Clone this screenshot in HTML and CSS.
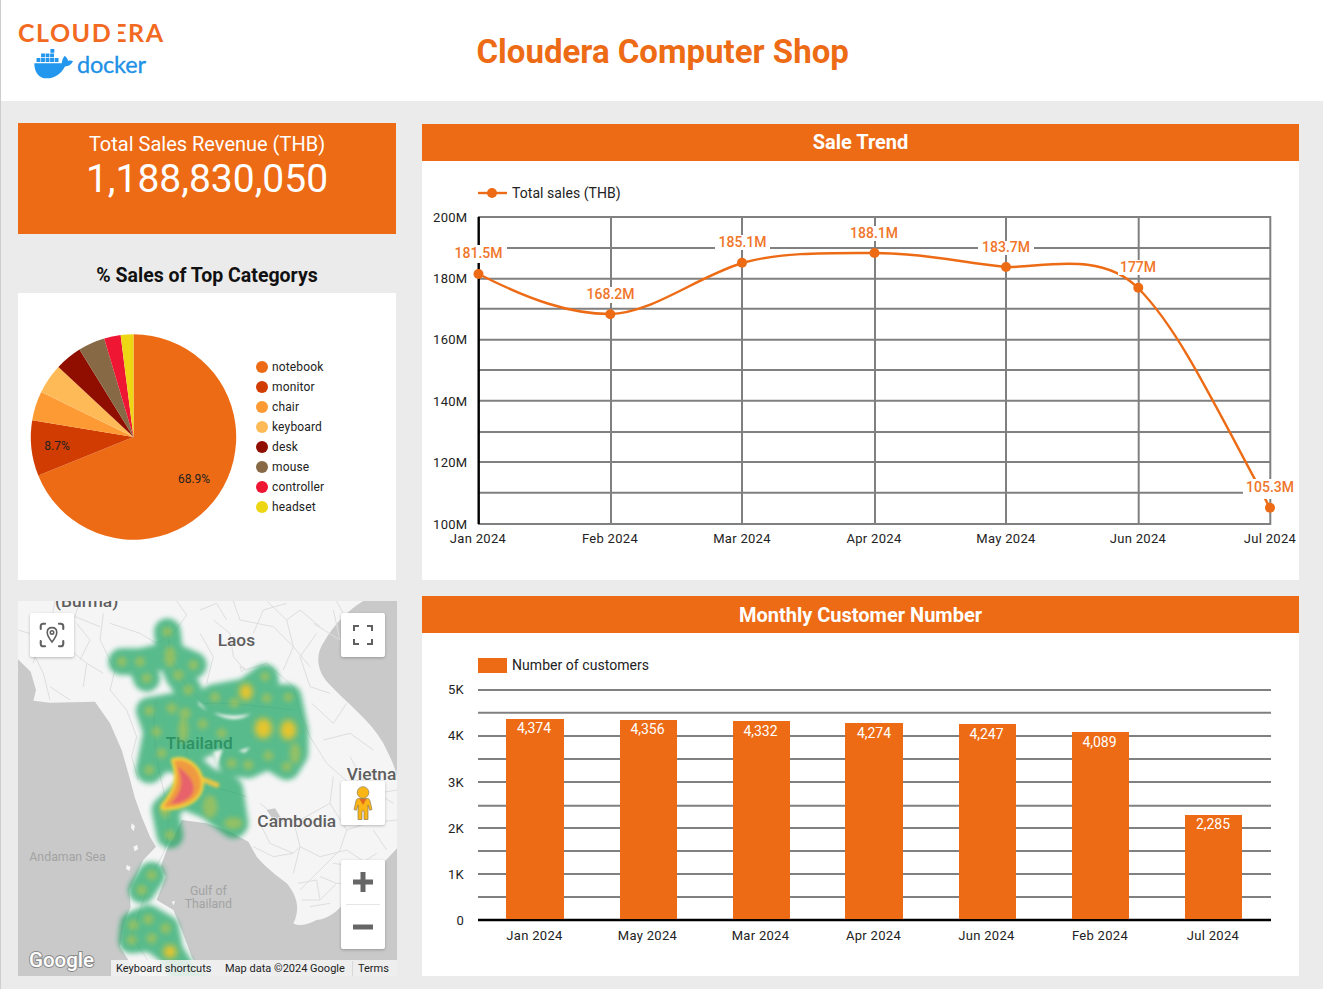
FILE: index.html
```html
<!DOCTYPE html>
<html lang="en">
<head>
<meta charset="utf-8">
<title>Cloudera Computer Shop</title>
<link rel="stylesheet" href="styles.css">
</head>
<body>
<div class="page">
  <header class="top">
    <div class="brand">
      <div class="cloudera">CLOUD<span class="logo-e">E</span>RA</div>
      <div class="docker">
        <svg class="whale" viewBox="100 140 125 96">
          <path class="whale-body" d="M103 187H188C189 177 193 169 197 164C203 169 207 175 208 180C213 178 218 178 223 181C218 192 208 197 198 197C188 216 170 234 140 234C118 234 103 215 103 187Z"/>
          <path class="whale-body" d="M110 171h12v12h-12zM124 171h12v12h-12zM138 171h12v12h-12zM152 171h12v12h-12zM166 171h12v12h-12zM124 157h12v12h-12zM138 157h12v12h-12zM152 157h12v12h-12zM153 143h12v12h-12z"/>
        </svg>
        <span class="docker-word">docker</span>
      </div>
    </div>
    <h1 class="title">Cloudera Computer Shop</h1>
  </header>

  <main class="board">
    <section class="left">
      <div class="kpi">
        <div class="kpi-label">Total Sales Revenue (THB)</div>
        <div class="kpi-value">1,188,830,050</div>
      </div>
      <h2 class="pie-title">% Sales of Top Categorys</h2>
      <div class="pie-card">
        <svg class="pie" viewBox="18 293 238 287">
          <path class="s1" d="M133.5 437V334.3A102.7 102.7 0 1 1 38.3 475.5Z"/>
          <path class="s2" d="M133.5 437L38.3 475.5A102.7 102.7 0 0 1 32.2 420.2Z"/>
          <path class="s3" d="M133.5 437L32.2 420.2A102.7 102.7 0 0 1 41.2 392Z"/>
          <path class="s4" d="M133.5 437L41.2 392A102.7 102.7 0 0 1 58.4 367Z"/>
          <path class="s5" d="M133.5 437L58.4 367A102.7 102.7 0 0 1 79.5 349.6Z"/>
          <path class="s6" d="M133.5 437L79.5 349.6A102.7 102.7 0 0 1 104.2 338.6Z"/>
          <path class="s7" d="M133.5 437L104.2 338.6A102.7 102.7 0 0 1 120.6 335.1Z"/>
          <path class="s8" d="M133.5 437L120.6 335.1A102.7 102.7 0 0 1 133.5 334.3Z"/>
          <text class="pie-pct" x="57" y="450" text-anchor="middle">8.7%</text>
          <text class="pie-pct" x="194" y="483" text-anchor="middle">68.9%</text>
        </svg>
        <ul class="legend">
          <li class="legend-item"><i class="dot s1"></i>notebook</li>
          <li class="legend-item"><i class="dot s2"></i>monitor</li>
          <li class="legend-item"><i class="dot s3"></i>chair</li>
          <li class="legend-item"><i class="dot s4"></i>keyboard</li>
          <li class="legend-item"><i class="dot s5"></i>desk</li>
          <li class="legend-item"><i class="dot s6"></i>mouse</li>
          <li class="legend-item"><i class="dot s7"></i>controller</li>
          <li class="legend-item"><i class="dot s8"></i>headset</li>
        </ul>
      </div>

      <div class="map">
        <svg class="map-art" viewBox="54 33 1137 1125">
          <defs>
            <filter id="b8" filterUnits="userSpaceOnUse" x="0" y="0" width="1300" height="1300"><feGaussianBlur stdDeviation="8"/></filter>
            <filter id="b5" filterUnits="userSpaceOnUse" x="0" y="0" width="1300" height="1300"><feGaussianBlur stdDeviation="5"/></filter>
            <filter id="b9" filterUnits="userSpaceOnUse" x="0" y="0" width="1300" height="1300"><feGaussianBlur stdDeviation="9"/></filter>
          </defs>
          <rect class="water" x="54" y="33" width="1137" height="1125"/>
          <path class="land" d="M54 33H1090C1045 60 1005 100 972 155C945 195 950 240 985 280C1040 340 1110 390 1150 460C1170 500 1185 530 1191 560V775C1150 820 1100 870 1060 905C1020 960 990 985 950 990C920 1005 895 1010 880 1000C905 950 885 910 860 880C835 860 800 835 770 800L745 755L690 725L620 700L545 690L520 745L500 780L482 830L497 860L470 930L520 960L545 1020L575 1100L605 1158H420L385 1110L360 1070L372 1000L392 950L388 900L405 865L430 810L468 770L450 740L425 680L405 625L388 560L365 480L330 400L285 335L150 338L100 332L108 300L92 245L54 208Z"/>
          <path class="land" d="M380 825l12 6-4 12-10-6zM400 770l12-6 2 14-10 6zM395 700l10 8-4 16-8-10zM515 935l10-3-4 14z"/>
          <g class="roads">
            <path d="M165 33L150 110L90 170L130 250L150 330"/>
            <path d="M310 70L300 150L345 240L330 300L380 360L410 440L395 500L415 570"/>
            <path d="M530 33L560 75L520 130L470 160L420 130L330 100"/>
            <path d="M640 90L690 130L700 200L735 240L800 220L880 290L900 370L930 440"/>
            <path d="M700 33L720 90L820 110L880 170L930 230"/>
            <path d="M800 33L860 90L900 60L960 110"/>
            <path d="M930 440L980 520L1060 590L1130 610L1191 600"/>
            <path d="M1000 560L990 640L1040 720L1020 780L960 840L900 900"/>
            <path d="M780 640L830 680L900 690L990 640"/>
            <path d="M880 690L900 770L960 800L1040 780L1100 820"/>
            <path d="M820 800L880 790L900 770"/>
            <path d="M1040 720L1100 700L1191 690"/>
            <path d="M1050 500L1100 590L1180 640"/>
            <path d="M960 860L1010 880L1060 880M905 930L960 930L1010 880"/>
            <path d="M150 200L210 180L260 220L250 290"/>
            <path d="M230 100L270 150L240 210"/>
            <path d="M470 330C450 420 470 520 500 640C505 700 510 740 490 790L450 860"/>
            <path d="M500 100L510 200L560 290L610 340L700 340L880 360"/>
            <path d="M555 370L560 500L640 590L740 620"/>
            <path d="M940 100L1020 150L1000 60M1040 90L1010 33"/>
            <path d="M600 60L650 40L680 90"/>
            <path d="M720 230L735 235L725 245Z"/>
            <path d="M470 1158L430 1090L395 1040L440 900"/>
            <path d="M55 120L120 140L165 110M120 140L100 220"/>
            <path d="M240 33L225 80L300 110M260 220L310 250M150 290L210 330"/>
            <path d="M860 90L880 170L850 240M950 130L900 200L930 290L990 310"/>
            <path d="M760 130L790 60L860 40M600 130L640 200L620 280"/>
            <path d="M935 340L1000 400L1040 340M970 450L1050 430L1120 480"/>
            <path d="M1080 560L1040 620L1090 670L1150 660M1120 720L1160 780"/>
            <path d="M780 700L810 760L880 790M760 770L820 800"/>
            <path d="M900 770L880 850M1000 820L1070 830L1130 790"/>
            <path d="M930 950L990 940M895 880L950 870L960 930"/>
          </g>
          <path class="tonle" d="M800 660L825 655L850 695L820 690Z"/>
          <text class="m-big" x="260" y="50" text-anchor="middle">(Burma)</text>
          <text class="m-big" x="653" y="168">Laos</text>
          <text class="m-big" x="497" y="477">Thailand</text>
          <text class="m-big" x="1040" y="570">Vietnam</text>
          <text class="m-big" x="772" y="710">Cambodia</text>
          <text class="m-sea" x="88" y="812">Andaman Sea</text>
          <text class="m-sea" x="625" y="915" text-anchor="middle">Gulf of</text>
          <text class="m-sea" x="625" y="955" text-anchor="middle">Thailand</text>
          <g class="heat-green" filter="url(#b8)">
            <path d="M365 215L420 215L440 265M420 215L510 195L502 125M510 195L580 225M510 195L535 255L565 300"/>
            <path d="M448 362L515 350L555 370L645 322L738 305L795 262L800 325L865 322L885 420L885 490L860 530L805 497L745 525L695 520M448 362L470 425L448 540M470 425L608 402L665 430L790 415L885 420M555 370L550 480M645 322L608 402M738 305L790 415L805 497M665 430L695 520"/>
            <path class="heat-fill" d="M470 400L600 350L780 350L860 400L860 490L720 500L640 470L560 510L470 510Z"/>
            <path d="M448 540L490 500L560 520L620 570L690 600L705 700M690 600L630 650L700 705M560 600L495 660L510 735M630 650L560 620"/>
            <path d="M455 855L425 900"/>
            <path d="M400 1005L445 985L497 1015L510 1085L455 1045L395 1050L400 1005M510 1085L570 1180L620 1200"/>
          </g>
          <g class="heat-holes" filter="url(#b5)">
            <path d="M640 368C680 392 720 395 755 370C735 378 690 380 640 368Z"/>
            <path d="M592 332L612 352L620 362L598 346Z"/>
            <path d="M715 482L750 472L735 488Z"/>
            <path d="M640 485L668 478L650 530Z"/>
          </g>
          <g class="heat-spots" filter="url(#b8)">
            <circle cx="502" cy="125" r="15"/><circle cx="365" cy="215" r="15"/><circle cx="420" cy="215" r="15"/><circle cx="440" cy="265" r="15"/><circle cx="580" cy="225" r="15"/><circle cx="535" cy="255" r="16"/><circle cx="565" cy="300" r="15"/><circle cx="645" cy="322" r="15"/><circle cx="703" cy="338" r="15"/><circle cx="800" cy="325" r="15"/><circle cx="795" cy="260" r="14"/><circle cx="865" cy="322" r="14"/><circle cx="448" cy="362" r="15"/><circle cx="515" cy="355" r="16"/><circle cx="555" cy="370" r="17"/><circle cx="470" cy="425" r="15"/><circle cx="608" cy="402" r="15"/><circle cx="665" cy="430" r="15"/><circle cx="805" cy="497" r="15"/><circle cx="695" cy="520" r="15"/><circle cx="745" cy="525" r="15"/><circle cx="860" cy="530" r="15"/><circle cx="448" cy="540" r="15"/><circle cx="485" cy="490" r="15"/><circle cx="510" cy="735" r="15"/><circle cx="455" cy="855" r="16"/><circle cx="425" cy="900" r="16"/><circle cx="400" cy="1005" r="16"/><circle cx="445" cy="988" r="16"/><circle cx="497" cy="1015" r="16"/><circle cx="395" cy="1050" r="15"/><circle cx="455" cy="1045" r="16"/>
            <ellipse cx="510" cy="200" rx="17" ry="32"/><ellipse cx="550" cy="420" rx="15" ry="36"/><ellipse cx="885" cy="490" rx="16" ry="32"/><ellipse cx="700" cy="700" rx="28" ry="18"/><ellipse cx="630" cy="650" rx="22" ry="34"/><ellipse cx="495" cy="660" rx="15" ry="24"/>
          </g>
          <g class="heat-yellow" filter="url(#b9)">
            <ellipse cx="738" cy="306" rx="20" ry="25"/><ellipse cx="790" cy="415" rx="26" ry="30"/><ellipse cx="865" cy="420" rx="24" ry="30"/><circle cx="510" cy="1085" r="20"/>
          </g>
          <g filter="url(#b5)">
            <path class="arm" d="M600 565L650 585"/>
            <path class="blob-y" d="M522 512C552 505 592 522 602 570C610 622 560 652 490 652C505 622 550 590 522 512Z"/>
            <path class="blob-o" d="M522 512C552 505 592 522 602 570C610 622 560 652 490 652C505 622 550 590 522 512Z"/>
            <path class="blob-r" d="M532 530C558 545 586 572 580 604C572 630 540 642 510 642C530 622 560 590 532 530Z"/>
          </g>
        </svg>

        <button class="ctl ctl-geo" type="button" aria-label="Location">
          <svg class="ctl-icon" viewBox="0 0 30 30">
            <path class="stroke-dark" d="M2 8V5Q2 2 5 2H7M23 2H25Q28 2 28 5V8M28 22V25Q28 28 25 28H23M7 28H5Q2 28 2 25V22"/>
            <path class="stroke-dark thin" d="M15 6.500C11.500 6.500 9.500 9 9.500 12C9.500 16 15 23 15 23C15 23 20.500 16 20.500 12C20.500 9 18.500 6.500 15 6.500Z"/>
            <circle class="stroke-dark thin" cx="15" cy="12" r="2"/>
          </svg>
        </button>
        <button class="ctl ctl-full" type="button" aria-label="Fullscreen">
          <svg class="ctl-icon" viewBox="0 0 20 20">
            <path class="stroke-dark sq" d="M1 6V1H6M14 1H19V6M19 14V19H14M6 19H1V14"/>
          </svg>
        </button>
        <button class="ctl ctl-peg" type="button" aria-label="Street View">
          <svg class="peg-icon" viewBox="0 0 20 34">
            <circle class="peg" cx="10" cy="6.500" r="5.800"/>
            <path class="peg" d="M5.500 12.500H14.500C16 12.500 16.500 13.500 17 15L19 23.500L16.600 24.200L15 19V33.500H11V25H9V33.500H5V19L3.400 24.200L1 23.500L3 15C3.500 13.500 4 12.500 5.500 12.500Z"/>
            <path class="peg-v" d="M6.500 13H13.500L10 19Z"/>
          </svg>
        </button>
        <div class="ctl ctl-zoom">
          <svg class="zoom-glyph" viewBox="0 0 20 20"><path class="z-mark" d="M10 0V20M0 10H20"/></svg>
          <span class="zoom-rule"></span>
          <svg class="zoom-glyph" viewBox="0 0 20 20"><path class="z-mark" d="M0 10H20"/></svg>
        </div>
        <span class="g-logo">Google</span>
        <div class="attrib">
          <span class="a-keys">Keyboard shortcuts</span>
          <span class="a-data">Map data ©2024 Google</span>
          <span class="a-terms">Terms</span>
        </div>
      </div>
    </section>

    <section class="right">
      <article class="panel panel-line">
        <h2 class="panel-head">Sale Trend</h2>
        <svg class="chart" viewBox="422 161 877 419">
          <path class="grid" d="M478 217H1271M478 248H1271M478 278.700H1271M478 308.700H1271M478 339.700H1271M478 370H1271M478 400.700H1271M478 432H1271M478 462H1271M478 492.700H1271M478 524H1271M611 217V524M742 217V524M875 217V524M1006 217V524M1138.700 217V524M1270.300 216V525"/>
          <path class="axis" d="M478.700 217V524"/>
          <path class="trend" d="M478.500 274C530 300 570 314 610 314C650 314 695 278 742 263C780 252 830 253 874 253C920 253 960 262 1006 267C1040 268 1100 250 1138 288C1175 325 1205 385 1270 508"/>
          <rect class="mask" x="452" y="245" width="55" height="18"/>
          <rect class="mask" x="586" y="287" width="49" height="16"/>
          <rect class="mask" x="715" y="235" width="55" height="15"/>
          <rect class="mask" x="847" y="226" width="54" height="15"/>
          <rect class="mask" x="978" y="241" width="56" height="14"/>
          <rect class="mask" x="1118" y="260" width="39" height="15"/>
          <rect class="mask" x="1243" y="479" width="52" height="20"/>
          <g class="pt">
            <circle cx="478.500" cy="274" r="5"/><circle cx="610.300" cy="314.300" r="5"/><circle cx="742" cy="262.700" r="5"/><circle cx="874.500" cy="253" r="5"/><circle cx="1006" cy="267" r="5"/><circle cx="1138.300" cy="287.700" r="5"/><circle cx="1270" cy="507.700" r="5"/>
          </g>
          <g class="val" text-anchor="middle">
            <text x="478.500" y="258">181.5M</text>
            <text x="610.500" y="299">168.2M</text>
            <text x="742.500" y="247">185.1M</text>
            <text x="874" y="238">188.1M</text>
            <text x="1006" y="252">183.7M</text>
            <text x="1138" y="272">177M</text>
            <text x="1270" y="492">105.3M</text>
          </g>
          <g class="tick" text-anchor="end">
            <text x="467.500" y="222">200M</text><text x="467.500" y="283">180M</text><text x="467.500" y="344">160M</text><text x="467.500" y="406">140M</text><text x="467.500" y="467">120M</text><text x="467.500" y="529">100M</text>
          </g>
          <g class="tick" text-anchor="middle">
            <text x="478" y="543">Jan 2024</text><text x="610" y="543">Feb 2024</text><text x="742" y="543">Mar 2024</text><text x="874" y="543">Apr 2024</text><text x="1006" y="543">May 2024</text><text x="1138" y="543">Jun 2024</text><text x="1270" y="543">Jul 2024</text>
          </g>
          <path class="trend" d="M478 193H507"/>
          <circle class="pt" cx="492" cy="193" r="5"/>
          <text class="lg" x="512" y="198">Total sales (THB)</text>
        </svg>
      </article>

      <article class="panel panel-bar">
        <h2 class="panel-head">Monthly Customer Number</h2>
        <svg class="chart" viewBox="422 633 877 343">
          <path class="grid" d="M478 690H1271M478 712.700H1271M478 736H1271M478 759H1271M478 782H1271M478 805.700H1271M478 828H1271M478 851H1271M478 874H1271M478 897H1271"/>
          <path class="axis" d="M478 920H1271"/>
          <g class="bar">
            <rect x="506" y="719" width="58" height="200"/><rect x="620" y="720" width="57" height="199"/><rect x="733" y="721" width="57" height="198"/><rect x="845" y="723" width="58" height="196"/><rect x="959" y="724" width="57" height="195"/><rect x="1072" y="732" width="57" height="187"/><rect x="1185" y="815" width="57" height="104"/>
          </g>
          <g class="bar-val" text-anchor="middle">
            <text x="534" y="733">4,374</text><text x="647.500" y="734">4,356</text><text x="760.500" y="736">4,332</text><text x="874" y="738">4,274</text><text x="986.500" y="739">4,247</text><text x="1099.500" y="747">4,089</text><text x="1213" y="829">2,285</text>
          </g>
          <g class="tick" text-anchor="end">
            <text x="464" y="694">5K</text><text x="464" y="740">4K</text><text x="464" y="787">3K</text><text x="464" y="833">2K</text><text x="464" y="879">1K</text><text x="464" y="925">0</text>
          </g>
          <g class="tick" text-anchor="middle">
            <text x="534.500" y="940">Jan 2024</text><text x="647.500" y="940">May 2024</text><text x="760.500" y="940">Mar 2024</text><text x="873.500" y="940">Apr 2024</text><text x="986.500" y="940">Jun 2024</text><text x="1100" y="940">Feb 2024</text><text x="1213" y="940">Jul 2024</text>
          </g>
          <rect class="bar" x="478" y="658" width="29" height="15"/>
          <text class="lg" x="512" y="670">Number of customers</text>
        </svg>
      </article>
    </section>
  </main>
</div>
</body>
</html>
```
FILE: styles.css
```css
* { box-sizing: border-box; }
html, body { margin: 0; padding: 0; }
body {
  width: 1323px;
  height: 989px;
  overflow: hidden;
  background: #ebebeb;
  font-family: Roboto, "Liberation Sans", sans-serif;
  color: #222;
}
.page { height: 989px; border-left: 1px solid #cdcdcd; display: flex; flex-direction: column; }

/* Header */
.top { height: 101px; flex: none; background: #fff; display: flex; position: relative; }
.brand { width: 300px; padding: 19px 0 0 17px; flex: none; }
.cloudera {
  font: 700 25px/27px Lato, Roboto, sans-serif;
  letter-spacing: 1.5px;
  color: #f26a21;
  white-space: nowrap;
}
.logo-e { position: relative; display: inline-block; }
.logo-e::after { content: ""; position: absolute; left: 0; top: 0; bottom: 0; width: 5.5px; background: #fff; }
.docker { display: flex; align-items: flex-end; margin: 2px 0 0 15px; }
.whale { width: 41px; height: 31px; display: block; flex: none; }
.whale-body { fill: #2396ed; }
.docker-word {
  font: 400 23.5px/29px Lato, "Open Sans", sans-serif;
  color: #2090e6;
  margin-left: 3px;
  letter-spacing: -.2px;
  -webkit-text-stroke: .3px #2090e6;
}
.title {
  margin: 0;
  position: absolute;
  left: 475.5px;
  top: 32px;
  font: 700 33px/40px Roboto, sans-serif;
  color: #ed6b15;
  white-space: nowrap;
}

/* Board */
.board { display: flex; gap: 26px; padding: 22px 0 0 17px; align-items: flex-start; }
.left { width: 378px; flex: none; }
.right { width: 877px; flex: none; margin-top: 1px; display: flex; flex-direction: column; gap: 16px; }

.kpi { height: 111px; background: #ed6b15; color: #fff; text-align: center; padding-top: 9px; }
.kpi-label { font: 400 20px/24px Roboto, sans-serif; }
.kpi-value { font: 400 39px/46px Roboto, sans-serif; }
.pie-title {
  margin: 0;
  height: 59px;
  padding-top: 30px;
  text-align: center;
  font: 700 19.5px/24px Roboto, sans-serif;
  color: #111;
}

.pie-card { height: 287px; background: #fff; display: flex; align-items: center; }
.pie { width: 238px; height: 287px; display: block; flex: none; }
.s1 { fill: #ed6b15; background: #ed6b15; }
.s2 { fill: #d13c02; background: #d13c02; }
.s3 { fill: #fd9a33; background: #fd9a33; }
.s4 { fill: #fdba57; background: #fdba57; }
.s5 { fill: #8f0e00; background: #8f0e00; }
.s6 { fill: #876a45; background: #876a45; }
.s7 { fill: #ef1633; background: #ef1633; }
.s8 { fill: #edd714; background: #edd714; }
.pie-pct { font: 400 12px Roboto, sans-serif; fill: #222; }
.legend { list-style: none; margin: 0; padding: 0; }
.legend-item { display: flex; align-items: center; height: 20px; font-size: 12px; letter-spacing: .15px; color: #222; }
.dot { width: 12px; height: 12px; border-radius: 50%; margin-right: 4px; flex: none; }

/* Map */
.map { position: relative; width: 379px; height: 375px; margin-top: 21px; overflow: hidden; background: #c9c9c9; }
.map-art { width: 379px; height: 375px; display: block; }
.water { fill: #c9c9c9; }
.land { fill: #f5f5f5; }
.roads path { fill: none; stroke: #dedede; stroke-width: 3; stroke-linejoin: round; }
.tonle { fill: #c9c9c9; }
.m-big { font: 500 52px Roboto, sans-serif; fill: #5e5e5e; paint-order: stroke; stroke: #f5f5f5; stroke-width: 4px; }
.m-sea { font: 400 37px Roboto, sans-serif; fill: #a3a3a3; }
.heat-green { opacity: .72; }
.heat-green path { fill: none; stroke: #1ca565; stroke-width: 80; stroke-linecap: round; stroke-linejoin: round; }
.heat-green .heat-fill { fill: #1ca565; stroke-width: 40; }
.heat-holes path { fill: #eef3ee; }
.heat-spots { fill: #cfc63e; opacity: .5; }
.heat-yellow { fill: #f7c622; opacity: .9; }
.arm { fill: none; stroke: #e9c645; stroke-width: 16; stroke-linecap: round; }
.blob-y { fill: #f3d03c; stroke: #f3d03c; stroke-width: 18; stroke-linejoin: round; }
.blob-o { fill: #ef9a3f; }
.blob-r { fill: #e7626a; }

.ctl {
  position: absolute;
  padding: 0;
  border: 0;
  border-radius: 2px;
  background: #fff;
  box-shadow: 0 1px 3px rgba(0,0,0,.25);
  display: flex;
  align-items: center;
  justify-content: center;
}
.ctl-geo { left: 12px; top: 12px; width: 44px; height: 44px; }
.ctl-full { left: 323px; top: 12px; width: 44px; height: 44px; }
.ctl-peg { left: 323px; top: 180px; width: 44px; height: 44px; }
.ctl-zoom { left: 323px; top: 259px; width: 44px; height: 89px; flex-direction: column; }
.ctl-icon { width: 26px; height: 26px; display: block; }
.ctl-full .ctl-icon { width: 20px; height: 20px; }
.stroke-dark { fill: none; stroke: #606060; stroke-width: 2.4; stroke-linecap: round; }
.stroke-dark.thin { stroke-width: 1.8; }
.stroke-dark.sq { stroke-linecap: butt; stroke-width: 2; }
.peg-icon { width: 20px; height: 34px; display: block; }
.peg { fill: #f9b616; stroke: #8d7a58; stroke-width: .7; }
.peg-v { fill: #e2671f; }
.zoom-glyph { width: 20px; height: 20px; display: block; margin: 12px 0; }
.z-mark { fill: none; stroke: #666; stroke-width: 5; }
.zoom-rule { width: 34px; height: 1px; background: #e6e6e6; display: block; }

.g-logo {
  position: absolute;
  left: 11px;
  bottom: 3px;
  font: 500 20.5px/26px Roboto, sans-serif;
  color: #fff;
  -webkit-text-stroke: 2px #8a8a8a;
  paint-order: stroke fill;
}
.attrib {
  position: absolute;
  left: 93px;
  right: 0;
  bottom: 0;
  height: 16px;
  padding-top: 1px;
  display: flex;
  background: rgba(245,245,245,.85);
  font: 400 11px/16px Roboto, sans-serif;
  color: #222;
  white-space: nowrap;
}
.a-keys { margin-left: 5px; width: 109px; }
.a-data { width: 127px; }
.a-terms { border-left: 1px solid #d8d8d8; padding-left: 5px; }

/* Panels */
.panel { background: #fff; display: flex; flex-direction: column; }
.panel-line { height: 456px; }
.panel-bar { height: 380px; }
.panel-head {
  margin: 0;
  height: 37px;
  flex: none;
  background: #ed6b15;
  color: #fff;
  text-align: center;
  font: 700 20px/37px Roboto, sans-serif;
}
.panel-bar .panel-head { line-height: 39px; }
.chart { width: 877px; flex: 1; display: block; }
.grid { fill: none; stroke: #808080; stroke-width: 2; }
.axis { fill: none; stroke: #000; stroke-width: 2.4; }
.trend { fill: none; stroke: #ed6b15; stroke-width: 2.4; }
.mask { fill: #fff; }
.pt, .pt circle { fill: #ed6b15; }
.val text { font: 500 14px Roboto, sans-serif; fill: #f0762a; }
.tick text { font: 400 13px Roboto, sans-serif; fill: #222; letter-spacing: .3px; }
.lg { font: 400 14px Roboto, sans-serif; fill: #222; letter-spacing: .05px; }
.bar, .bar rect { fill: #ed6b15; }
.bar-val text { font: 400 14px Roboto, sans-serif; fill: #fff; }
```
